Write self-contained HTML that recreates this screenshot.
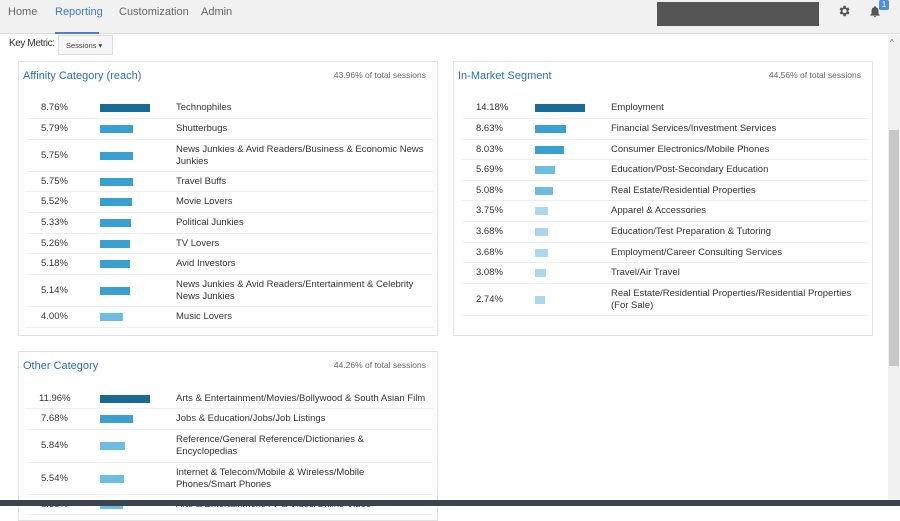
<!DOCTYPE html>
<html><head><meta charset="utf-8"><style>
*{margin:0;padding:0;box-sizing:border-box}
body{width:900px;height:506px;overflow:hidden;background:#fff;font-family:"Liberation Sans",sans-serif;position:relative;color:#333}
.hdr{position:absolute;left:0;top:0;width:900px;height:34px;background:#f1f1f1;border-bottom:1px solid #ddd}
.nav{position:absolute;top:6px;font-size:11px;color:#666}
.card{position:absolute;border:1px solid #e2e2e2;background:#fff}
.title{position:absolute;left:4px;top:8px;font-size:11px;color:#2a6fb0}
.tot{position:absolute;right:11px;top:8px;font-size:8.5px;color:#666}
.row{position:absolute;left:8px;width:406px;border-bottom:1px solid #eee;font-size:9.5px;line-height:12px}
.row .p{position:absolute;left:14px;top:50%;transform:translateY(-50%)}
.row .b{position:absolute;left:73px;top:50%;height:8px;margin-top:-4px}
.row .t{position:absolute;left:149px;top:50%;transform:translateY(-50%);width:255px}
.d{background:#176b95}.m{background:#3aa0d2}.l{background:#6cbce3}.x{background:#a9d8ef}
</style></head><body>
<div class="hdr">
<span class="nav" style="left:8px">Home</span>
<span class="nav" style="left:55px;color:#3b78d8">Reporting</span>
<div style="position:absolute;left:55px;top:32px;width:44px;height:2px;background:#4a7fd8"></div>
<span class="nav" style="left:119px">Customization</span>
<span class="nav" style="left:201px">Admin</span>
<div style="position:absolute;left:657px;top:2px;width:162px;height:24px;background:#555"></div>
<svg style="position:absolute;left:837px;top:4px" width="14" height="14" viewBox="0 0 24 24"><path fill="#555" d="M19.4 13a7.5 7.5 0 0 0 0-2l2.1-1.6-2-3.5-2.5 1a7 7 0 0 0-1.7-1L15 3h-4l-.4 2.9a7 7 0 0 0-1.7 1l-2.5-1-2 3.5L6.6 11a7.5 7.5 0 0 0 0 2l-2.1 1.6 2 3.5 2.5-1a7 7 0 0 0 1.7 1L11 21h4l.4-2.9a7 7 0 0 0 1.7-1l2.5 1 2-3.5zM13 15.5a3.5 3.5 0 1 1 0-7 3.5 3.5 0 0 1 0 7z"/></svg>
<svg style="position:absolute;left:868px;top:4px" width="14" height="15" viewBox="0 0 24 24"><path fill="#555" d="M12 22a2 2 0 0 0 2-2h-4a2 2 0 0 0 2 2zm6-6V11c0-3-1.6-5.6-4.5-6.3V4a1.5 1.5 0 0 0-3 0v.7C7.6 5.4 6 8 6 11v5l-2 2v1h16v-1z"/></svg>
<div style="position:absolute;left:879px;top:0;width:10px;height:10px;border-radius:2px;background:#4a8fe0;color:#fff;font-size:8px;text-align:center;line-height:10px">1</div>
</div>
<div style="position:absolute;left:888px;top:35px;width:12px;height:465px;background:#f1f1f1"></div>
<div style="position:absolute;left:889px;top:130px;width:10px;height:236px;background:#c8c8c8"></div>
<div style="position:absolute;left:890px;top:38px;font-size:8px;color:#555">^</div>
<span style="position:absolute;left:9px;top:38px;font-size:10px;letter-spacing:-0.4px">Key Metric:</span>
<div style="position:absolute;left:58px;top:35px;width:55px;height:20px;border:1px solid #ddd;background:#f6f6f6;font-size:7.5px;color:#444;padding:5px 0 0 7px">Sessions &#9662;</div>

<div class="card" style="left:18px;top:61px;width:420px;height:275px">
<div class="title">Affinity Category (reach)</div><div class="tot">43.96% of total sessions</div>
<div class="row" style="top:36px;height:21px"><span class="p">8.76%</span><span class="b d" style="width:50px"></span><span class="t">Technophiles</span></div>
<div class="row" style="top:57px;height:21px"><span class="p">5.79%</span><span class="b m" style="width:33px"></span><span class="t">Shutterbugs</span></div>
<div class="row" style="top:78px;height:32px"><span class="p">5.75%</span><span class="b m" style="width:33px"></span><span class="t">News Junkies &amp; Avid Readers/Business &amp; Economic News Junkies</span></div>
<div class="row" style="top:110px;height:20px"><span class="p">5.75%</span><span class="b m" style="width:33px"></span><span class="t">Travel Buffs</span></div>
<div class="row" style="top:130px;height:21px"><span class="p">5.52%</span><span class="b m" style="width:32px"></span><span class="t">Movie Lovers</span></div>
<div class="row" style="top:151px;height:21px"><span class="p">5.33%</span><span class="b m" style="width:31px"></span><span class="t">Political Junkies</span></div>
<div class="row" style="top:172px;height:20px"><span class="p">5.26%</span><span class="b m" style="width:30px"></span><span class="t">TV Lovers</span></div>
<div class="row" style="top:192px;height:21px"><span class="p">5.18%</span><span class="b m" style="width:30px"></span><span class="t">Avid Investors</span></div>
<div class="row" style="top:213px;height:32px"><span class="p">5.14%</span><span class="b m" style="width:30px"></span><span class="t">News Junkies &amp; Avid Readers/Entertainment &amp; Celebrity News Junkies</span></div>
<div class="row" style="top:245px;height:21px"><span class="p">4.00%</span><span class="b l" style="width:23px"></span><span class="t">Music Lovers</span></div>
</div>

<div class="card" style="left:453px;top:61px;width:420px;height:275px">
<div class="title">In-Market Segment</div><div class="tot">44.56% of total sessions</div>
<div class="row" style="top:36px;height:21px"><span class="p">14.18%</span><span class="b d" style="width:50px"></span><span class="t">Employment</span></div>
<div class="row" style="top:57px;height:21px"><span class="p">8.63%</span><span class="b m" style="width:31px"></span><span class="t">Financial Services/Investment Services</span></div>
<div class="row" style="top:78px;height:20px"><span class="p">8.03%</span><span class="b m" style="width:29px"></span><span class="t">Consumer Electronics/Mobile Phones</span></div>
<div class="row" style="top:98px;height:21px"><span class="p">5.69%</span><span class="b l" style="width:20px"></span><span class="t">Education/Post-Secondary Education</span></div>
<div class="row" style="top:119px;height:20px"><span class="p">5.08%</span><span class="b l" style="width:18px"></span><span class="t">Real Estate/Residential Properties</span></div>
<div class="row" style="top:139px;height:21px"><span class="p">3.75%</span><span class="b x" style="width:13px"></span><span class="t">Apparel &amp; Accessories</span></div>
<div class="row" style="top:160px;height:21px"><span class="p">3.68%</span><span class="b x" style="width:13px"></span><span class="t">Education/Test Preparation &amp; Tutoring</span></div>
<div class="row" style="top:181px;height:20px"><span class="p">3.68%</span><span class="b x" style="width:13px"></span><span class="t">Employment/Career Consulting Services</span></div>
<div class="row" style="top:201px;height:21px"><span class="p">3.08%</span><span class="b x" style="width:11px"></span><span class="t">Travel/Air Travel</span></div>
<div class="row" style="top:222px;height:32px"><span class="p">2.74%</span><span class="b x" style="width:10px"></span><span class="t">Real Estate/Residential Properties/Residential Properties (For Sale)</span></div>
</div>

<div class="card" style="left:18px;top:351px;width:420px;height:170px">
<div class="title">Other Category</div><div class="tot">44.26% of total sessions</div>
<div class="row" style="top:37px;height:20px"><span class="p" style="left:12px">11.96%</span><span class="b d" style="width:50px"></span><span class="t" style="white-space:nowrap">Arts &amp; Entertainment/Movies/Bollywood &amp; South Asian Film</span></div>
<div class="row" style="top:57px;height:21px"><span class="p">7.68%</span><span class="b m" style="width:33px"></span><span class="t">Jobs &amp; Education/Jobs/Job Listings</span></div>
<div class="row" style="top:78px;height:33px"><span class="p">5.84%</span><span class="b l" style="width:25px"></span><span class="t" style="width:205px">Reference/General Reference/Dictionaries &amp; Encyclopedias</span></div>
<div class="row" style="top:111px;height:32px"><span class="p">5.54%</span><span class="b l" style="width:24px"></span><span class="t" style="width:205px">Internet &amp; Telecom/Mobile &amp; Wireless/Mobile Phones/Smart Phones</span></div>
<div class="row" style="top:143px;height:20px"><span class="p">5.35%</span><span class="b l" style="width:23px"></span><span class="t">Arts &amp; Entertainment/TV &amp; Video/Online Video</span></div>
</div>
<div style="position:absolute;left:0;top:500px;width:900px;height:6px;background:#3a4450"></div>
</body></html>
